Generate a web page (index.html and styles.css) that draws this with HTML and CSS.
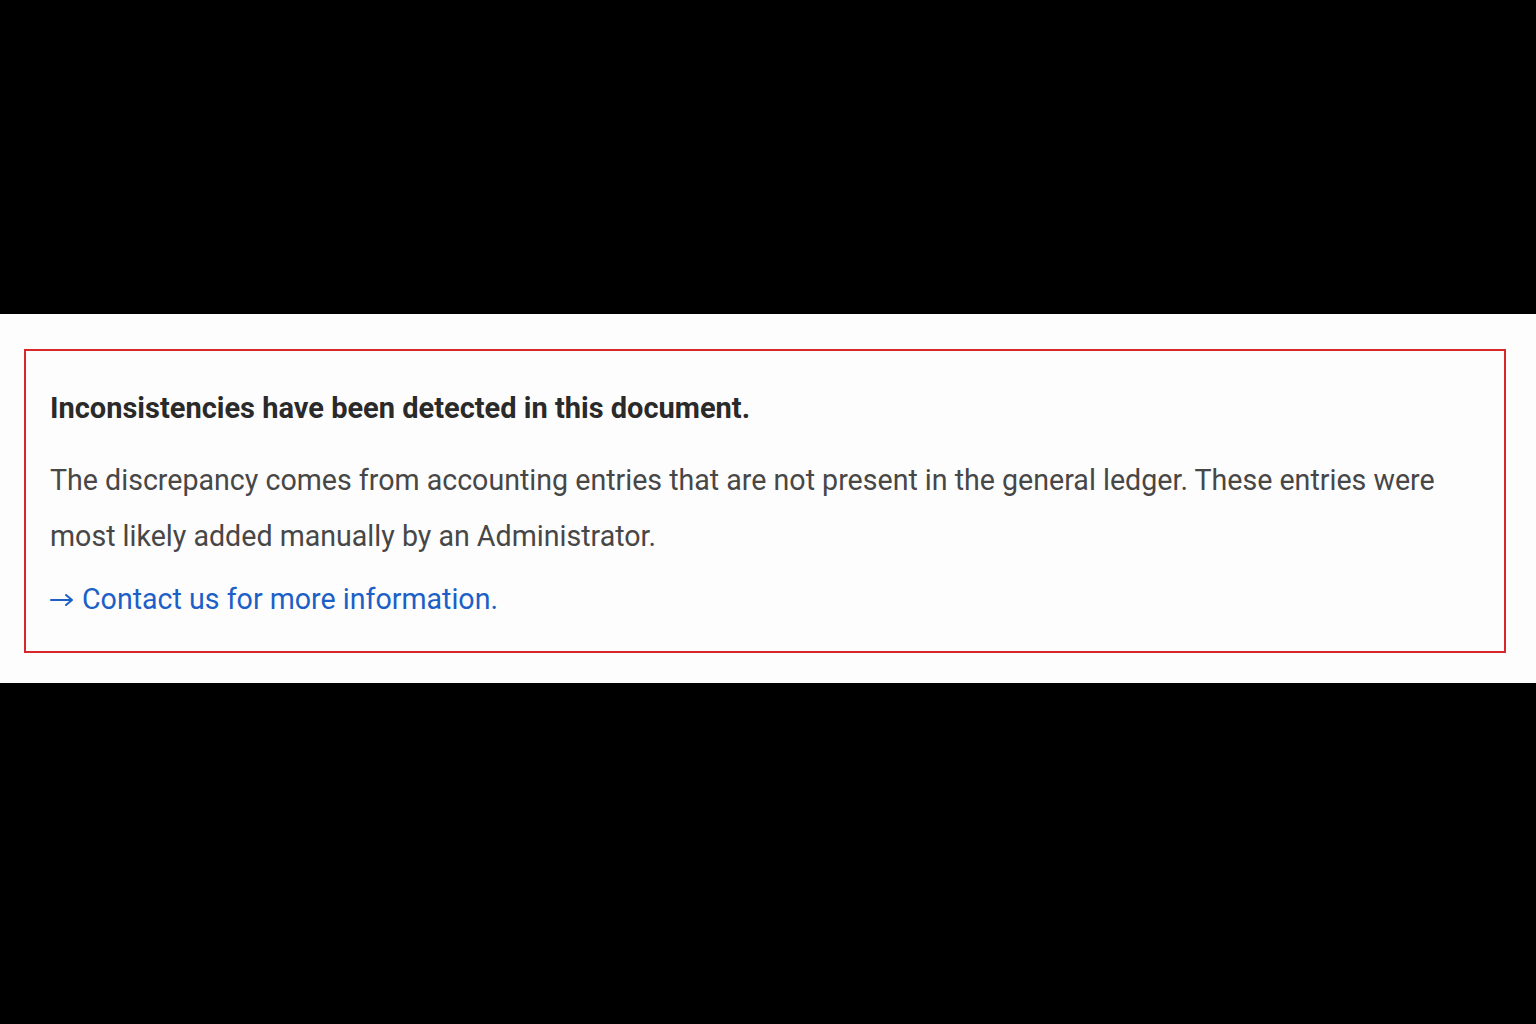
FILE: index.html
```html
<!DOCTYPE html>
<html lang="en">
<head>
<meta charset="utf-8">
<title>Inconsistencies</title>
<link rel="stylesheet" href="styles.css">
</head>
<body>
<div class="top-band"></div>
<section class="band">
  <div class="alert">
    <h2 class="alert-title">Inconsistencies have been detected in this document.</h2>
    <p class="alert-text">The discrepancy comes from accounting entries that are not present in the general ledger. These entries were most likely added manually by an Administrator.</p>
    <a class="alert-link" href="#"><svg class="arrow" width="24" height="14" viewBox="0 0 24 14" aria-hidden="true"><path d="M1 7H22M16 2L22 7L16 12" fill="none" stroke="currentColor" stroke-width="2" stroke-linecap="round" stroke-linejoin="round"/></svg>Contact us for more information.</a>
  </div>
</section>
</body>
</html>
```
FILE: styles.css
```css
html, body {
  margin: 0;
  padding: 0;
  background: #000;
  height: 1024px;
  overflow: hidden;
}
body {
  font-family: Roboto, "Liberation Sans", sans-serif;
}
.top-band {
  height: 314px;
}
.band {
  background: #fdfdfd;
  padding: 35px 30px 30px 24px;
}
.alert {
  border: 2px solid #d9282d;
  padding: 41px 40px 32px 24px;
  display: flex;
  flex-direction: column;
  align-items: flex-start;
}
.alert-title {
  margin: 0;
  font-size: 29px;
  line-height: 32px;
  font-weight: 700;
  color: #2a2a2a;
}
.alert-text {
  margin: 28px 0 0;
  font-size: 28.6px;
  line-height: 56px;
  color: #474747;
}
.alert-link {
  margin-top: 15px;
  font-size: 28.6px;
  line-height: 40px;
  color: #1c5fc6;
  text-decoration: none;
  display: flex;
  align-items: center;
  gap: 8px;
}
.arrow {
  flex: none;
  margin-top: 2px;
}
```
